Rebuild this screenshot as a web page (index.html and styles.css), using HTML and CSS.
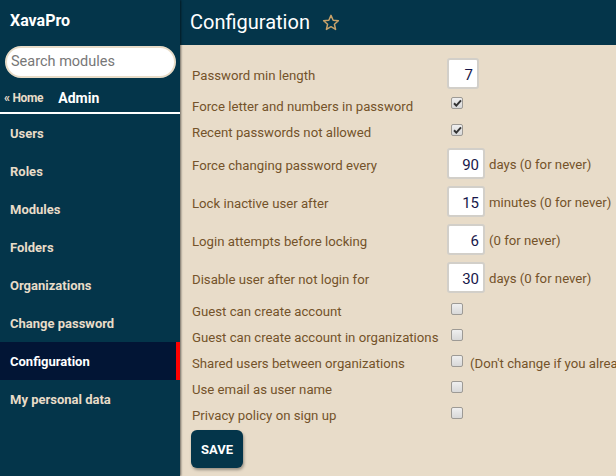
FILE: index.html
```html
<!DOCTYPE html>
<html>
<head>
<meta charset="utf-8">
<link rel="stylesheet" href="styles.css">
</head>
<body>
<div class="app">
  <aside class="sidebar">
    <div class="brand">XavaPro</div>
    <div class="search-wrap"><input class="search" type="text" placeholder="Search modules"></div>
    <div class="crumbs"><span class="home">« Home</span><span class="folder">Admin</span></div>
    <nav class="menu">
      <div class="item">Users</div>
      <div class="item">Roles</div>
      <div class="item">Modules</div>
      <div class="item">Folders</div>
      <div class="item">Organizations</div>
      <div class="item">Change password</div>
      <div class="item active">Configuration</div>
      <div class="item">My personal data</div>
    </nav>
  </aside>
  <main class="main">
    <header class="topbar">
      <h1 class="title">Configuration</h1>
      <svg class="star" width="18" height="17" viewBox="0 0 24 23"><path d="M12 1.8l2.9 6.6 7.1.7-5.4 4.8 1.6 7-6.2-3.7-6.2 3.7 1.6-7L2 9.1l7.1-.7z" fill="none" stroke="#c9a26a" stroke-width="2" stroke-linejoin="round"/></svg>
    </header>
    <section class="content">
      <div class="row r1"><span class="label">Password min length</span><span class="value"><span class="num w1">7</span></span></div>
      <div class="row r2"><span class="label">Force letter and numbers in password</span><span class="value"><span class="cb checked"><svg width="9" height="8" viewBox="0 0 9 8"><path d="M1 4.3l2.3 2.3L8 1.4" fill="none" stroke="#333" stroke-width="2"/></svg></span></span></div>
      <div class="row r3"><span class="label">Recent passwords not allowed</span><span class="value"><span class="cb checked"><svg width="9" height="8" viewBox="0 0 9 8"><path d="M1 4.3l2.3 2.3L8 1.4" fill="none" stroke="#333" stroke-width="2"/></svg></span></span></div>
      <div class="row rn"><span class="label">Force changing password every</span><span class="value"><span class="num">90</span><span class="suffix">days (0 for never)</span></span></div>
      <div class="row rn"><span class="label">Lock inactive user after</span><span class="value"><span class="num">15</span><span class="suffix">minutes (0 for never)</span></span></div>
      <div class="row rn"><span class="label">Login attempts before locking</span><span class="value"><span class="num">6</span><span class="suffix">(0 for never)</span></span></div>
      <div class="row rn"><span class="label">Disable user after not login for</span><span class="value"><span class="num">30</span><span class="suffix">days (0 for never)</span></span></div>
      <div class="row rc first"><span class="label">Guest can create account</span><span class="value"><span class="cb"></span></span></div>
      <div class="row rc"><span class="label">Guest can create account in organizations</span><span class="value"><span class="cb"></span></span></div>
      <div class="row rc"><span class="label">Shared users between organizations</span><span class="value"><span class="cb"></span><span class="note">(Don't change if you already have organizations)</span></span></div>
      <div class="row rc"><span class="label">Use email as user name</span><span class="value"><span class="cb"></span></span></div>
      <div class="row rc"><span class="label">Privacy policy on sign up</span><span class="value"><span class="cb"></span></span></div>
      <div class="actions"><button class="save">SAVE</button></div>
    </section>
  </main>
</div>
</body>
</html>
```
FILE: styles.css
```css
* { box-sizing: border-box; }
html, body { margin: 0; padding: 0; height: 100%; overflow: hidden; }
body { font-family: Roboto, "Liberation Sans", sans-serif; background: #e8dcc9; }
.app { display: flex; height: 476px; width: 616px; overflow: hidden; }

.sidebar {
  width: 180px; flex: none; background: #04354a; color: #e8dcc8;
  position: relative; z-index: 2; box-shadow: 1px 0 2px rgba(0,0,0,0.55);
}
.brand { height: 45px; padding: 11px 0 0 10px; font-weight: 700; font-size: 16px; color: #fff; }
.search-wrap { padding: 1px 4px 0 5px; }
.search {
  width: 171px; height: 32px; border-radius: 16px; border: 2px solid #e8dcc8;
  background: #fff; padding: 0 8px 2px 4px; font-family: Roboto, sans-serif; font-size: 14.5px; outline: none;
}
.search::placeholder { color: #777; }
.crumbs { height: 36px; display: flex; align-items: center; padding: 8px 0 0 4px; border-bottom: 2px solid #fff; }
.home { font-size: 12px; font-weight: 700; color: #e8dcc8; letter-spacing: -0.3px; margin-top: -2px; }
.folder { font-size: 14px; font-weight: 700; color: #fff; margin-left: 15px; margin-top: -2px; }
.menu { display: flex; flex-direction: column; }
.item { height: 38px; display: flex; align-items: center; padding-left: 10px; font-size: 13px; font-weight: 700; color: #e8dcc8; }
.item.active { background: #021535; color: #fff; border-right: 4px solid #f00; }

.main { flex: 1; display: flex; flex-direction: column; min-width: 0; }
.topbar { height: 45px; background: #04354a; display: flex; align-items: center; padding-left: 10px; flex: none; }
.title { margin: 0; font-size: 20px; font-weight: 400; color: #fff; padding-bottom: 2px; }
.star { margin-left: 12px; margin-bottom: 1px; }

.content { padding: 12px 0 0 12px; }
.row { display: flex; align-items: center; white-space: nowrap; }
.label { width: 255px; flex: none; font-size: 13.2px; color: #74532a; padding-top: 3px; }
.value { display: flex; align-items: center; }
.r1 { height: 33px; }
.r2 { height: 29px; }
.r3 { height: 25px; padding-bottom: 1px; }
.rn { height: 38px; }
.rn .label { padding-top: 5px; }
.rc { height: 26px; }
.rc.first { margin-top: 1px; }
.num {
  display: inline-block; width: 38px; height: 31px; background: #fff; border: 2px solid #d2cfc9;
  border-radius: 3px; text-align: right; padding: 6px 4px 0 0; font-size: 15px; color: #17174a;
}
.num.w1 { width: 32px; }
.suffix { margin-left: 4px; font-size: 13.2px; color: #74532a; padding-top: 3px; }
.cb {
  display: inline-flex; align-items: center; justify-content: center;
  width: 12px; height: 12px; margin-left: 4px; margin-top: -3px;
  border: 1px solid #9d9a95; border-radius: 2px; background: linear-gradient(#efefef, #d8d8d8);
}
.note { margin-left: 7px; font-size: 13.2px; color: #74532a; padding-top: 3px; }
.actions { padding-top: 3px; }
.save {
  width: 52px; height: 38px; border: none; border-radius: 6px; background: #04354a; color: #fff;
  font-family: Roboto, sans-serif; font-weight: 700; font-size: 13px; margin-left: -1px;
  box-shadow: 1px 2px 3px rgba(0,0,0,0.35);
}
```
